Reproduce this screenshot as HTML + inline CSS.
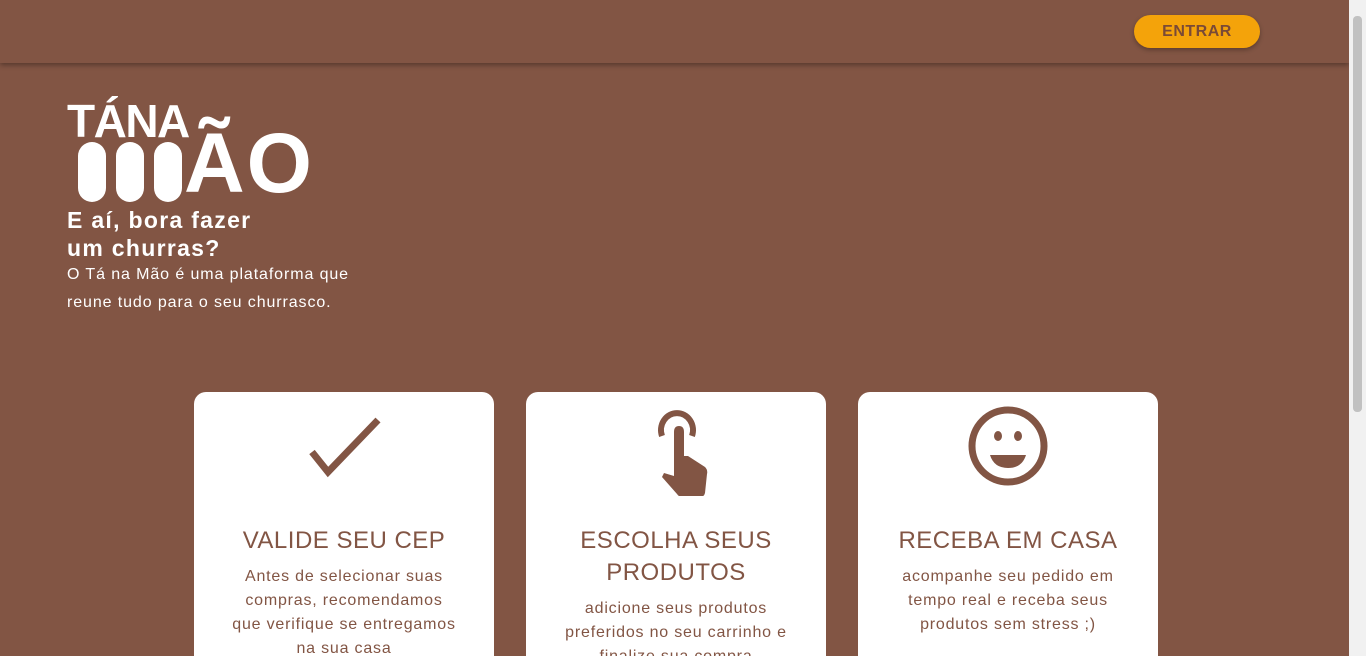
<!DOCTYPE html>
<html style="width:1366px;height:656px;overflow:hidden"><head><meta charset="utf-8"><style>
body{margin:0;width:1366px;height:656px;overflow:hidden;background:#825544;font-family:"Liberation Sans",sans-serif;position:relative}
.hdr{position:absolute;left:0;top:0;width:1349px;height:63px;background:#825544;box-shadow:0 2px 5px rgba(0,0,0,.35)}
.btn{position:absolute;left:1134px;top:15px;width:126px;height:33px;border-radius:17px;background:#f4a30a;color:#7a4a36;font-weight:bold;font-size:16px;text-align:center;line-height:33px;box-shadow:0 2px 5px rgba(0,0,0,.3);letter-spacing:.5px}
.sb{position:absolute;right:0;top:0;width:17px;height:656px;background:#f1f1f1}
.sb div{position:absolute;left:4px;top:16px;width:9px;height:396px;background:#c1c1c1;border-radius:4px}
.w{position:absolute;color:#fff}
.card{position:absolute;top:392px;width:300px;height:264px;background:#fff;border-radius:12px 12px 0 0;text-align:center;color:#825544;overflow:hidden}
.card h3{margin:0;position:absolute;top:133px;left:0;width:300px;font-weight:normal;font-size:24px;line-height:32px;letter-spacing:.5px}
.card p{margin:0;position:absolute;left:33px;width:234px;font-size:16px;line-height:24px;letter-spacing:.8px}
.card svg{position:absolute;left:110px;top:14px}
</style></head><body>
<div class="hdr"><div class="btn">ENTRAR</div></div>
<div class="sb"><div></div></div>
<div class="w" style="left:67px;top:96px;font-size:46px;font-weight:bold;letter-spacing:-1.5px;line-height:50px">TÁNA</div>
<div style="position:absolute;left:78px;top:142px;width:28px;height:60px;border-radius:14px;background:#fff"></div>
<div style="position:absolute;left:116px;top:142px;width:28px;height:60px;border-radius:14px;background:#fff"></div>
<div style="position:absolute;left:154px;top:142px;width:28px;height:60px;border-radius:14px;background:#fff"></div>
<div class="w" style="left:184px;top:118px;font-size:84px;font-weight:bold;line-height:90px;letter-spacing:2px">ÃO</div>
<div class="w" style="left:67px;top:206px;font-size:23px;font-weight:bold;line-height:28px;letter-spacing:1.3px">E aí, bora fazer<br>um churras?</div>
<div class="w" style="left:67px;top:261px;font-size:16px;line-height:28px;letter-spacing:.9px">O Tá na Mão é uma plataforma que<br>reune tudo para o seu churrasco.</div>
<div class="card" style="left:194px">
<svg width="80" height="80" viewBox="0 0 80 80"><path d="M8 46 L24 66 L74 14" fill="none" stroke="#825544" stroke-width="7"/></svg>
<h3>VALIDE SEU CEP</h3><p style="top:173px;left:10px;width:280px">Antes de selecionar suas<br>compras, recomendamos<br>que verifique se entregamos<br>na sua casa</p></div>
<div class="card" style="left:526px">
<svg width="80" height="90" viewBox="0 0 80 90"><path d="M26 30 A16 17 0 1 1 56 30" fill="none" stroke="#825544" stroke-width="6"/><path d="M38 72 L38 26 Q38 20 43 20 Q48 20 48 26 L48 50 L52 50 L69 61 Q72 64 71 68 L69 87 Q68 91 64 91 L46 91 Q43 91 41 88 L26 71 L28 67 L38 70Z" fill="#825544"/></svg>
<h3>ESCOLHA SEUS<br>PRODUTOS</h3><p style="top:205px">adicione seus produtos preferidos no seu carrinho e finalize sua compra</p></div>
<div class="card" style="left:858px">
<svg width="80" height="80" viewBox="0 0 80 80"><circle cx="40" cy="40" r="36" fill="none" stroke="#825544" stroke-width="7"/><ellipse cx="30" cy="30" rx="4" ry="5" fill="#825544"/><ellipse cx="50" cy="30" rx="4" ry="5" fill="#825544"/><path d="M22 49 L58 49 Q54 62 40 62 Q26 62 22 49Z" fill="#825544"/></svg>
<h3>RECEBA EM CASA</h3><p style="top:173px">acompanhe seu pedido em tempo real e receba seus produtos sem stress ;)</p></div>
</body></html>
